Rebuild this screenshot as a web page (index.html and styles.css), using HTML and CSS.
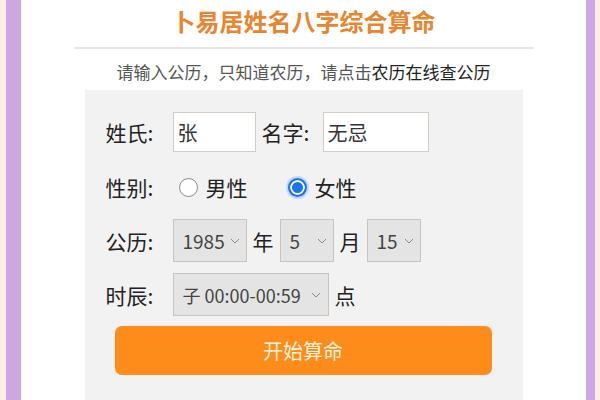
FILE: index.html
```html
<!DOCTYPE html>
<html lang="zh-CN">
<head>
<meta charset="utf-8">
<title>卜易居姓名八字综合算命</title>
<link rel="stylesheet" href="styles.css">
</head>
<body>
<div class="frame">
  <h1 class="title">卜易居姓名八字综合算命</h1>
  <div class="divider"></div>
  <p class="tip">请输入公历，只知道农历，请点击<a class="link" href="#">农历在线查公历</a></p>
  <form class="panel">
    <div class="row row-name">
      <span class="label">姓氏:</span>
      <input class="field field-sur" type="text" value="张">
      <span class="label label-given">名字:</span>
      <input class="field field-given" type="text" value="无忌">
    </div>
    <div class="row row-sex">
      <span class="label">性别:</span>
      <span class="radio"></span><span class="opt">男性</span>
      <span class="radio radio-on"></span><span class="opt">女性</span>
    </div>
    <div class="row row-date">
      <span class="label">公历:</span>
      <div class="select sel-year"><span>1985</span><svg class="chev" viewBox="0 0 10 6" width="10" height="6"><path d="M1 1 L5 5 L9 1" fill="none" stroke="#8a8a8a" stroke-width="1"/></svg></div>
      <span class="unit">年</span>
      <div class="select sel-small"><span>5</span><svg class="chev" viewBox="0 0 10 6" width="10" height="6"><path d="M1 1 L5 5 L9 1" fill="none" stroke="#8a8a8a" stroke-width="1"/></svg></div>
      <span class="unit">月</span>
      <div class="select sel-small"><span>15</span><svg class="chev" viewBox="0 0 10 6" width="10" height="6"><path d="M1 1 L5 5 L9 1" fill="none" stroke="#8a8a8a" stroke-width="1"/></svg></div>
    </div>
    <div class="row row-hour">
      <span class="label">时辰:</span>
      <div class="select sel-hour"><span>子 00:00-00:59</span><svg class="chev" viewBox="0 0 10 6" width="10" height="6"><path d="M1 1 L5 5 L9 1" fill="none" stroke="#8a8a8a" stroke-width="1"/></svg></div>
      <span class="unit">点</span>
    </div>
    <button class="submit" type="button">开始算命</button>
  </form>
</div>
</body>
</html>
```

FILE: styles.css
```css
* { box-sizing: border-box; }
html, body { height: 100%; }
body {
  margin: 0;
  padding: 0 5px 0 6px;
  background: #fdeee5;
  font-family: "Noto Sans CJK SC", "Noto Sans", sans-serif;
  overflow: hidden;
}
.frame {
  min-height: 100%;
  background: #ffffff;
  border-left: 15px solid #cda6e2;
  border-right: 9px solid #cda6e2;
  display: flex;
  flex-direction: column;
  align-items: center;
}
.title {
  margin: 0;
  padding-top: 6px;
  font-size: 24px;
  line-height: 30px;
  font-weight: bold;
  color: #e8852f;
}
.divider {
  width: 460px;
  height: 2px;
  background: #e6e6e6;
  margin-top: 11px;
}
.tip {
  margin: 11px 0 0;
  font-size: 17px;
  line-height: 24px;
  color: #555555;
}
.link { color: #222222; text-decoration: none; }
.panel {
  margin-top: 6px;
  width: 438px;
  flex: 1;
  background: #f2f2f2;
  padding: 22px 0 40px 21px;
  display: flex;
  flex-direction: column;
}
.row {
  display: flex;
  align-items: center;
  font-size: 21px;
  color: #222222;
}
.label { width: 67px; flex: none; }
.label-given { width: 61px; margin-left: 6px; }
.field {
  height: 40px;
  border: 1px solid #d6cbc2;
  background: #ffffff;
  font-family: inherit;
  font-size: 20px;
  color: #333333;
  padding: 0 4px;
  outline: none;
}
.field-sur { width: 83px; }
.field-given { width: 106px; }
.row-sex { margin-top: 20px; height: 30px; }
.radio {
  width: 19px;
  height: 19px;
  border-radius: 50%;
  border: 1px solid #8c8c8c;
  background: #ffffff;
  margin-left: 6px;
  flex: none;
}
.radio-on {
  margin-left: 40px;
  border: 2px solid #1a74ec;
  background: #1a74ec;
  box-shadow: inset 0 0 0 2px #ffffff, 0 0 0 2px #c3dbfa;
}
.opt { margin-left: 8px; }
.row-date { margin-top: 17px; }
.row-hour { margin-top: 11px; }
.select {
  height: 43px;
  background: #e4e4e4;
  border: 1px solid #cdc3bb;
  display: flex;
  align-items: center;
  justify-content: space-between;
  padding: 0 6px 0 9px;
  font-size: 19px;
  color: #444444;
}
.chev { flex: none; }
.sel-year { width: 74px; }
.sel-small { width: 54px; }
.sel-hour { width: 156px; font-size: 18px; padding-right: 7px; }
.unit { margin: 0 6px; }
.submit {
  margin: 10px 0 0 9px;
  width: 377px;
  height: 49px;
  border: none;
  border-radius: 7px;
  background: #fd8c1b;
  color: #fff3df;
  font-family: inherit;
  font-size: 20px;
  cursor: pointer;
}
```
